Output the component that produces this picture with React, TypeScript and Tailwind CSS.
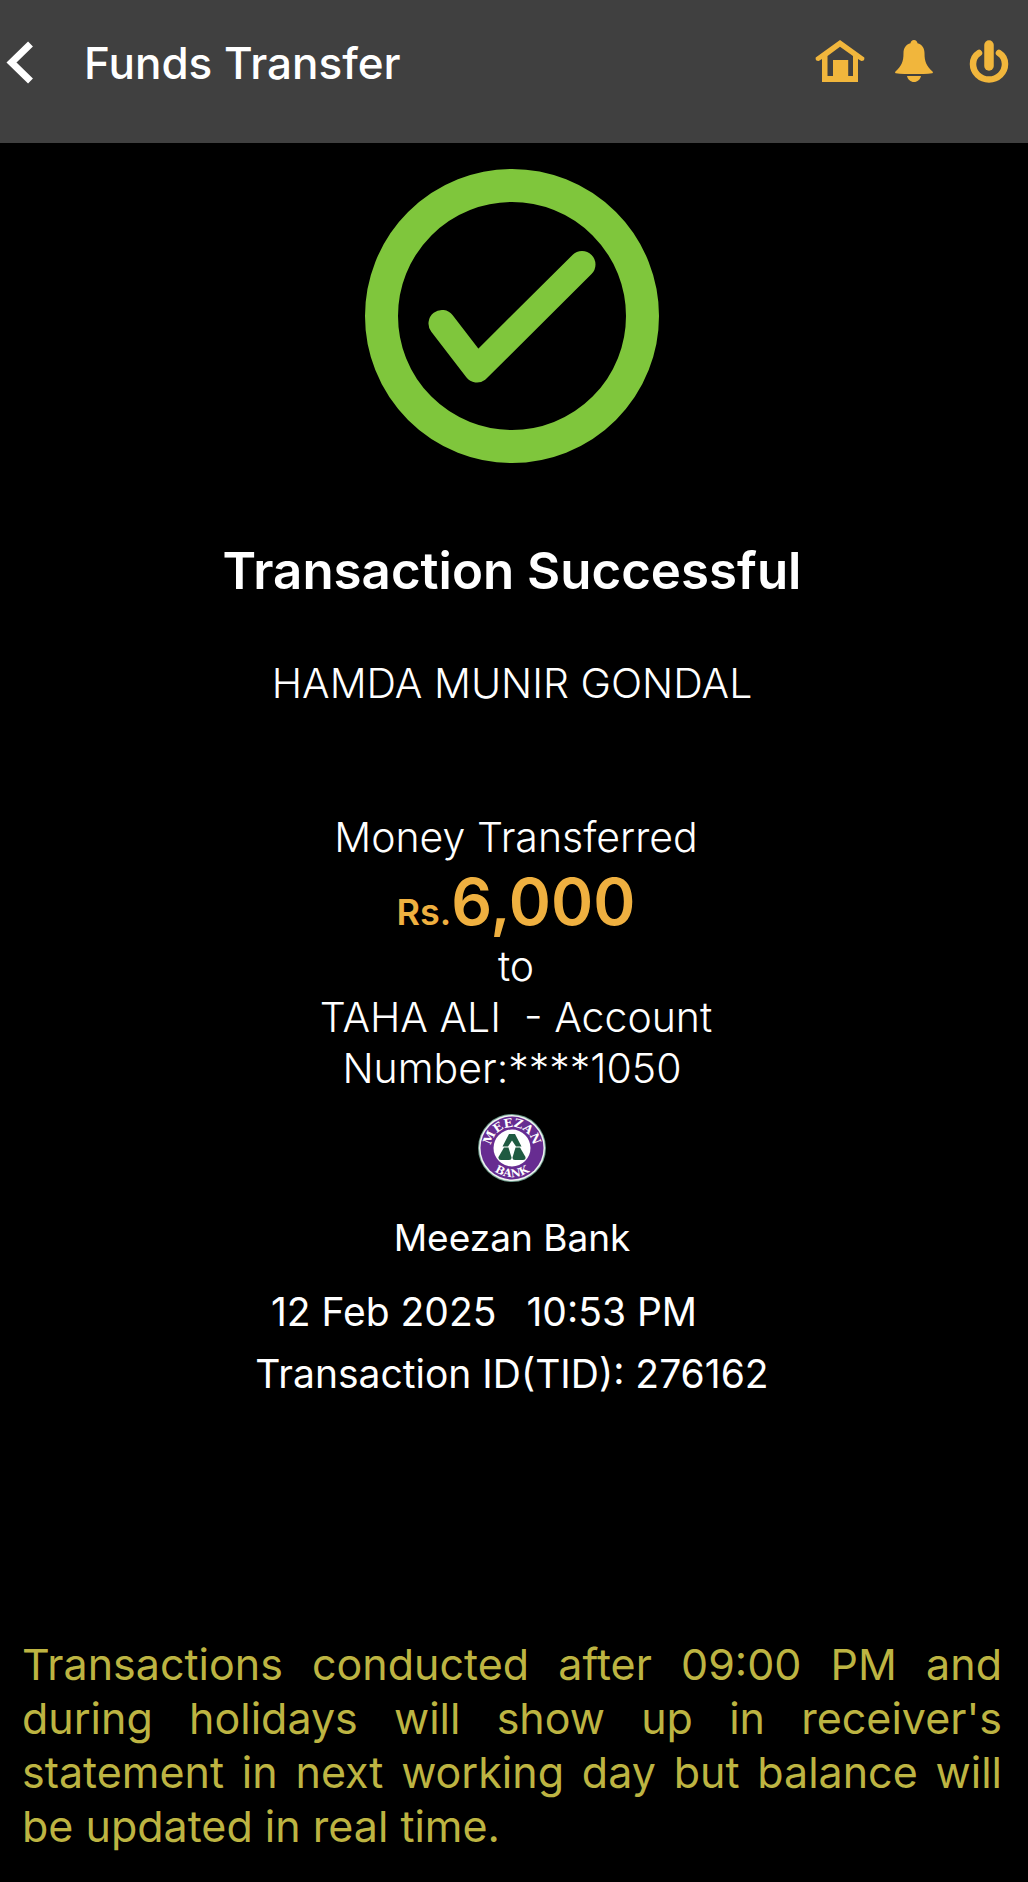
import type { ReactNode } from "react";

function BackIcon() {
  return (
    <svg viewBox="0 0 28 46" className="h-[46px] w-7" fill="none" aria-hidden="true">
      <path d="M24.5 4 5.5 22.5l19 18.5" stroke="#ffffff" strokeWidth="7" strokeLinejoin="miter" />
    </svg>
  );
}

function HomeIcon() {
  return (
    <svg viewBox="0 0 50 46" className="h-[46px] w-[50px]" fill="none" aria-hidden="true">
      <path d="M25 0 49.300 17.500q.7 3.500-3 3.500L43 19v23H7V19l-3.300 2q-3.700 0-3-3.500z" fill="#f1b63c" />
      <path d="M25 6.800 38 16v20h-4.800V20H18v16h-5.500V16z" fill="#404040" />
    </svg>
  );
}

function BellIcon() {
  return (
    <svg viewBox="0 0 38 46" className="h-[46px] w-[38px]" fill="#f1b63c" aria-hidden="true">
      <path d="M19 0c2 0 3.300 1.300 3.500 3.300C27 4.500 29.500 8 29.500 13c0 9 2 13 8 18.500.6.600.6 1.500-.3 1.700-10 1.200-26.400 1.200-36.400 0-.9-.2-.9-1.100-.3-1.700C6.500 26 8.500 22 8.500 13c0-5 2.500-8.500 7-9.700C15.700 1.300 17 0 19 0z" />
      <path d="M12 36h14c-.8 3.500-3.500 6-7 6s-6.200-2.500-7-6z" />
    </svg>
  );
}

function PowerIcon() {
  return (
    <svg viewBox="0 0 40 46" className="h-[46px] w-10" fill="none" stroke="#f1b63c" strokeLinecap="round" aria-hidden="true">
      <path d="M20 5v21" strokeWidth="9.500" />
      <path d="M10 13C6 15.500 4 19.500 4 24a16 15.500 0 0 0 32 0c0-4.500-2-8.500-6-11" strokeWidth="6.500" />
    </svg>
  );
}

function SuccessMark() {
  return (
    <svg viewBox="0 0 294 294" className="size-[294px]" fill="none" stroke="#7fc63c" role="img" aria-label="Success">
      <circle cx="147" cy="147" r="130.500" strokeWidth="33" />
      <path d="M77 154.500 112 200l105-104.500" strokeWidth="27" strokeLinecap="round" strokeLinejoin="round" />
    </svg>
  );
}

function BankLogo() {
  return (
    <svg viewBox="0 0 68 68" className="size-[68px]" role="img" aria-label="Meezan Bank logo">
      <defs>
        <path id="arc-top" d="M13 36v-2a21 21 0 0 1 42 0v2" />
        <path id="arc-bottom" d="M5 34a29 29 0 0 0 58 0" />
      </defs>
      <circle cx="34" cy="34" r="34" fill="#6f9c8c" />
      <circle cx="34" cy="34" r="33" fill="#f0f4f2" />
      <circle cx="34" cy="34" r="31.500" fill="#672c91" />
      <circle cx="34" cy="34" r="18.500" fill="#ffffff" />
      <g fill="#ffffff" fontFamily="'DejaVu Serif', serif" fontWeight="700" textAnchor="middle">
        <text fontSize="12">
          <textPath href="#arc-top" startOffset="50%">MEEZAN</textPath>
        </text>
        <text fontSize="11">
          <textPath href="#arc-bottom" startOffset="50%">BANK</textPath>
        </text>
      </g>
      <g fill="#1f5a41">
        <path d="M31 20h6l6.500 12.500h-5.500L34 26.500l-4 6h-5.500z" />
        <path d="M26 33.500h4.500l3 10q0 2.500-2.500 2.500h-8q-3 0-2.500-3z" />
        <path d="M37.500 33.500H42l5.500 9.500q.5 3-2.500 3h-8q-2.500 0-2.500-2.500z" />
      </g>
    </svg>
  );
}

function IconButton({ label, children }: { label: string; children: ReactNode }) {
  return (
    <button type="button" aria-label={label} className="cursor-pointer">
      {children}
    </button>
  );
}

export default function App() {
  return (
    <div className="min-h-screen bg-black font-['Inter',sans-serif] text-white">
      <header className="flex items-center bg-[#404040] pt-[33px] pr-[19px] pb-[50px] pl-1.5">
        <IconButton label="Back">
          <BackIcon />
        </IconButton>
        <h1 className="ml-[50px] flex-1 text-[44px] leading-[60px] font-medium">Funds Transfer</h1>
        <nav aria-label="Quick actions" className="flex items-center">
          <IconButton label="Home">
            <HomeIcon />
          </IconButton>
          <span className="w-[30px]" />
          <IconButton label="Notifications">
            <BellIcon />
          </IconButton>
          <span className="w-9" />
          <IconButton label="Log out">
            <PowerIcon />
          </IconButton>
        </nav>
      </header>

      <main>
        <section className="flex flex-col items-center pt-[26px] pr-1 text-center">
          <SuccessMark />
          <h2 className="mt-[76px] text-[51px] leading-[64px] font-semibold">Transaction Successful</h2>
          <p className="mt-[54px] text-[41px] leading-[52px] font-light">HAMDA MUNIR GONDAL</p>

          <div className="mt-[103px] flex flex-col items-center text-[41px] leading-[51px] font-light">
            <p className="pl-2">Money Transferred</p>
            <p className="my-[7px] pl-2 text-[64px] leading-[64px] font-semibold text-[#efb040]">
              <span className="text-[36px] leading-none">Rs.</span>6,000
            </p>
            <p className="pl-2">to</p>
            <p className="pl-2">TAHA ALI &nbsp;- Account</p>
            <p>Number:****1050</p>
          </div>

          <div className="mt-5">
            <BankLogo />
          </div>
          <p className="mt-8 text-[37px] leading-[48px]">Meezan Bank</p>
          <p className="mt-[26px] flex gap-[30px] pr-14 text-[39px] leading-[48px]">
            <span>12 Feb 2025</span>
            <span>10:53 PM</span>
          </p>
          <p className="mt-3.5 text-[39px] leading-[48px]">Transaction ID(TID): 276162</p>
        </section>

        <p className="mt-[239px] pr-[26px] pb-[27px] pl-[22px] text-justify text-[43px] leading-[54px] text-[#bdb442]">
          Transactions conducted after 09:00 PM and during holidays will show up in receiver's statement in next
          working day but balance will be updated in real time.
        </p>
      </main>
    </div>
  );
}
